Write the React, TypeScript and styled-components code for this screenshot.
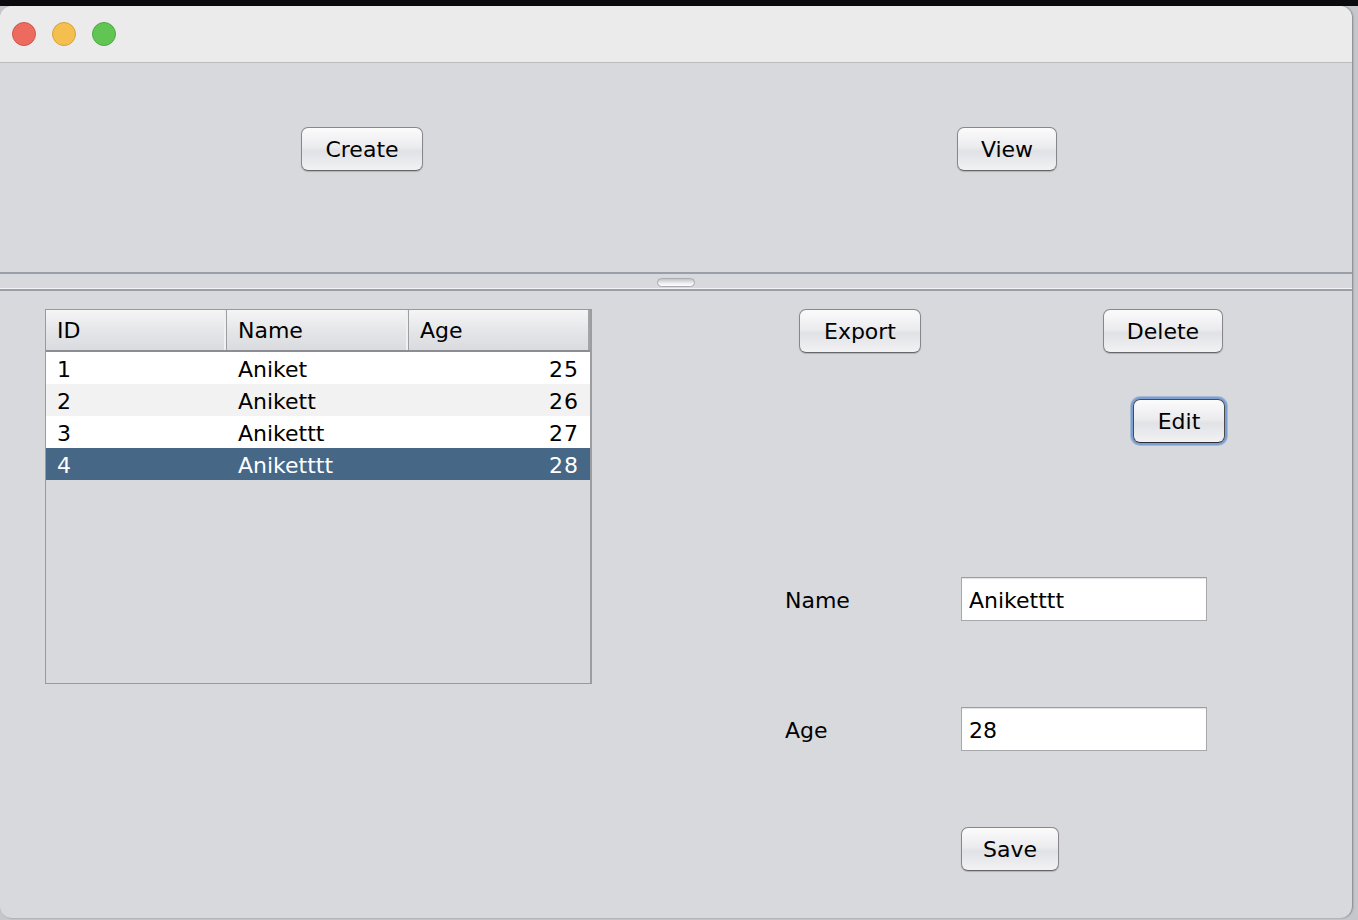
import React, { useState } from 'react';
import styled, { createGlobalStyle } from 'styled-components';

interface IPerson {
  id: number;
  name: string;
  age: number;
}

const people: IPerson[] = [
  { id: 1, name: 'Aniket', age: 25 },
  { id: 2, name: 'Anikett', age: 26 },
  { id: 3, name: 'Anikettt', age: 27 },
  { id: 4, name: 'Aniketttt', age: 28 },
];

export default function App() {
  const [selected, setSelected] = useState(4);
  const current = people.find((p) => p.id === selected);

  return (
    <Desktop>
      <GlobalStyle />
      <Window>
        <TitleBar>
          <Light color="#ed6a5e" edge="#d1564b" />
          <Light color="#f5bf4f" edge="#d6a23b" />
          <Light color="#61c554" edge="#4ea943" />
        </TitleBar>

        <TopPanel>
          <Button w={122}>Create</Button>
          <Button w={100}>View</Button>
        </TopPanel>

        <Divider>
          <Grip />
        </Divider>

        <LowerPanel>
          <Table>
            <HeaderRow>
              <HeaderCell>ID</HeaderCell>
              <HeaderCell>Name</HeaderCell>
              <HeaderCell last>Age</HeaderCell>
            </HeaderRow>
            {people.map((p, i) => (
              <Row
                key={p.id}
                striped={i % 2 === 1}
                active={p.id === selected}
                onClick={() => setSelected(p.id)}
              >
                <Cell>{p.id}</Cell>
                <Cell>{p.name}</Cell>
                <Cell right>{p.age}</Cell>
              </Row>
            ))}
          </Table>

          <Controls>
            <ActionRow>
              <Button w={122}>Export</Button>
              <Button w={120}>Delete</Button>
            </ActionRow>
            <EditRow>
              <Button w={92} focused>
                Edit
              </Button>
            </EditRow>
            <Form>
              <Label>Name</Label>
              <Field defaultValue={current?.name} key={`n${selected}`} />
              <Label>Age</Label>
              <Field defaultValue={current?.age} key={`a${selected}`} />
            </Form>
            <SaveRow>
              <Button w={98}>Save</Button>
            </SaveRow>
          </Controls>
        </LowerPanel>
      </Window>
    </Desktop>
  );
}

const GlobalStyle = createGlobalStyle`
  html, body {
    margin: 0;
    padding: 0;
    background: #c6c7cc;
    overflow: hidden;
  }
  * {
    box-sizing: border-box;
  }
`;

const Desktop = styled.div`
  width: 1358px;
  height: 920px;
  padding-top: 6px;
  background: linear-gradient(#0a0a0f 0 6px, #c6c7cc 6px);
  font-family: 'DejaVu Sans', 'Liberation Sans', sans-serif;
  font-size: 22px;
  color: #000;
`;

const Window = styled.div`
  width: 1352px;
  height: 912px;
  border-radius: 12px;
  overflow: hidden;
  background: #d8d9dd;
  display: flex;
  flex-direction: column;
  box-shadow: 1px 0 2px rgba(0, 0, 0, 0.35);
`;

const TitleBar = styled.div`
  height: 57px;
  flex-shrink: 0;
  background: #ebebeb;
  border-bottom: 1px solid #bdbdbf;
  display: flex;
  align-items: center;
  gap: 16px;
  padding: 0 0 0 12px;
`;

const Light = styled.div<{ color: string; edge: string }>`
  width: 24px;
  height: 24px;
  border-radius: 50%;
  background: ${(p) => p.color};
  border: 1px solid ${(p) => p.edge};
`;

const TopPanel = styled.div`
  height: 209px;
  flex-shrink: 0;
  display: flex;
  align-items: flex-start;
  gap: 534px;
  padding: 64px 0 0 301px;
`;

const Button = styled.button<{ w: number; focused?: boolean }>`
  width: ${(p) => p.w}px;
  height: 44px;
  flex-shrink: 0;
  font-family: inherit;
  font-size: 22px;
  color: #000;
  padding: 1px 0 0;
  border: 1px solid #88888c;
  border-bottom-color: #66666a;
  border-radius: 7px;
  background: linear-gradient(#fbfbfc 0%, #ececef 45%, #e1e2e6 55%, #f2f2f4 100%);
  box-shadow: ${(p) =>
    p.focused
      ? '0 0 0 2px #7b9fd2, 0 0 0 3px rgba(123, 159, 210, 0.55)'
      : '0 1px 1px rgba(0, 0, 0, 0.18)'};
  ${(p) => (p.focused ? 'border-color: #4a4a4e; border-bottom-color: #2e2e32;' : '')}
  cursor: default;
`;

const Divider = styled.div`
  height: 19px;
  flex-shrink: 0;
  display: flex;
  justify-content: center;
  align-items: flex-start;
  border-top: 2px solid #9a9ea6;
  border-bottom: 2px solid #9a9ea6;
  box-shadow: inset 0 -1px 0 #f4f4f6;
`;

const Grip = styled.div`
  width: 38px;
  height: 9px;
  margin-top: 4px;
  border-radius: 5px;
  border: 1px solid #a9acb3;
  background: linear-gradient(#c2c4ca, #eeeef0 60%, #ffffff);
`;

const LowerPanel = styled.div`
  flex: 1;
  display: flex;
  align-items: flex-start;
  padding: 18px 0 0 45px;
`;

const Table = styled.div`
  width: 547px;
  height: 375px;
  flex-shrink: 0;
  border: 1px solid #999a9e;
  border-right: 2px solid #9c9da1;
  background: #d8d9dd;
`;

const HeaderRow = styled.div`
  display: grid;
  grid-template-columns: 181px 182px 1fr;
  height: 42px;
  border-bottom: 2px solid #8c8d92;
  background: linear-gradient(#f5f5f6, #e4e5e8 55%, #dadbdf);
`;

const HeaderCell = styled.div<{ last?: boolean }>`
  display: flex;
  align-items: center;
  padding: 1px 0 0 11px;
  border-right: ${(p) => (p.last ? '2px solid #a3a4a8' : '1px solid #9d9ea2')};
  box-shadow: ${(p) => (p.last ? 'none' : 'inset -2px 0 0 #f0f0f2')};
`;

const Row = styled.div<{ striped: boolean; active: boolean }>`
  display: grid;
  grid-template-columns: 181px 182px 1fr;
  height: 32px;
  align-items: center;
  padding-top: 2px;
  background: ${(p) => (p.active ? '#466786' : p.striped ? '#f2f2f2' : '#ffffff')};
  color: ${(p) => (p.active ? '#ffffff' : '#000000')};
`;

const Cell = styled.div<{ right?: boolean }>`
  padding: 0 11px;
  text-align: ${(p) => (p.right ? 'right' : 'left')};
  letter-spacing: ${(p) => (p.right ? '1px' : '0')};
  white-space: nowrap;
`;

const Controls = styled.div`
  margin-left: 193px;
  display: flex;
  flex-direction: column;
  align-items: flex-start;
`;

const ActionRow = styled.div`
  display: flex;
  gap: 182px;
  padding-left: 14px;
`;

const EditRow = styled.div`
  padding: 46px 0 0 348px;
`;

const Form = styled.div`
  display: grid;
  grid-template-columns: 176px 246px;
  grid-template-rows: 44px 44px;
  row-gap: 86px;
  align-items: center;
  margin-top: 134px;
`;

const SaveRow = styled.div`
  padding: 76px 0 0 176px;
`;

const Label = styled.div`
  padding-top: 2px;
`;

const Field = styled.input`
  width: 246px;
  height: 44px;
  font-family: inherit;
  font-size: 22px;
  color: #000;
  padding: 2px 0 0 7px;
  border: 1px solid #a7a8ab;
  border-top-color: #9d9ea2;
  background: #fff;
  box-shadow: inset 0 1px 1px rgba(0, 0, 0, 0.12);
  outline: none;
`;
